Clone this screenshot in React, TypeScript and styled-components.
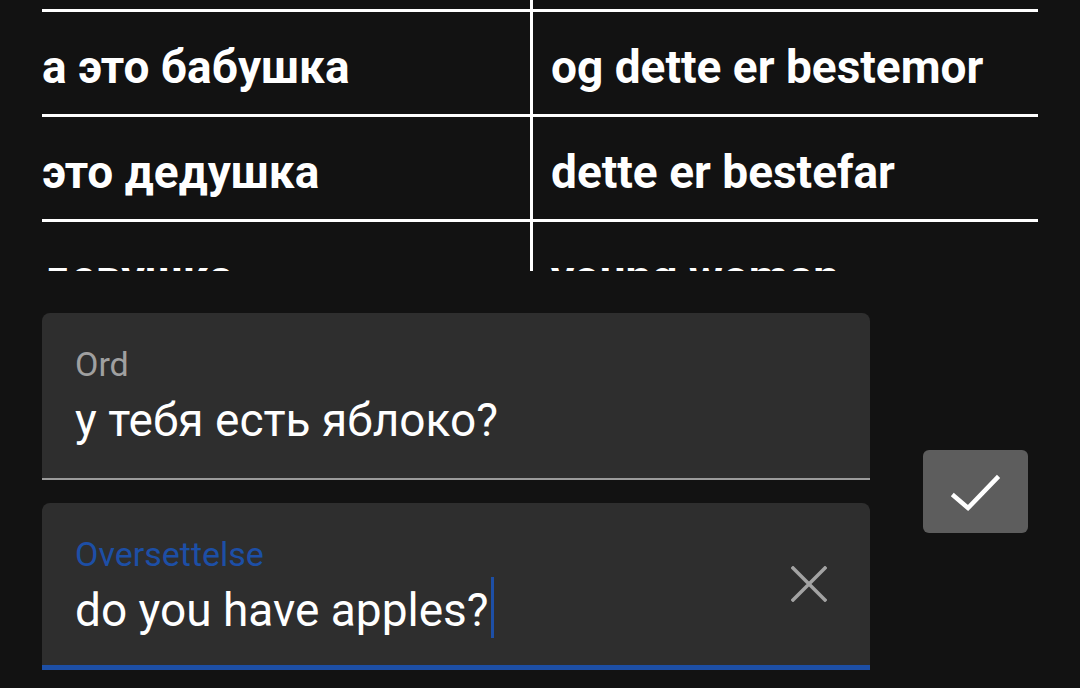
import React from "react";
import styled, { createGlobalStyle } from "styled-components";

const GlobalStyle = createGlobalStyle`
  html, body { margin: 0; padding: 0; background: #121212; }
  body { font-family: Roboto, "Noto Sans", "Liberation Sans", sans-serif; color: #fff; }
  * { box-sizing: border-box; }
`;

const Page = styled.div`
  width: 1080px;
  height: 688px;
  overflow: hidden;
  background: #121212;
  display: flex;
  flex-direction: column;
`;

const TableViewport = styled.div`
  margin: 0 42px;
  height: 271px;
  overflow: hidden;
  flex-shrink: 0;
`;

const TableInner = styled.div`
  margin-top: -93px;
`;

const Row = styled.div`
  display: grid;
  grid-template-columns: 491px 1fr;
  border-bottom: 3px solid #ffffff;
`;

const Cell = styled.div<{ $first?: boolean }>`
  height: 102px;
  display: flex;
  align-items: center;
  padding-top: 8px;
  padding-left: ${(p) => (p.$first ? "0" : "18px")};
  border-right: ${(p) => (p.$first ? "3px solid #ffffff" : "none")};
  font-size: 46px;
  line-height: 54px;
  font-weight: 700;
  color: #ffffff;
  white-space: nowrap;
`;

const FormRow = styled.div`
  margin-top: 42px;
  padding-left: 42px;
  display: flex;
  align-items: center;
  gap: 53px;
`;

const Fields = styled.div`
  width: 828px;
  display: flex;
  flex-direction: column;
  gap: 23px;
`;

const Field = styled.div<{ $focused?: boolean }>`
  height: 167px;
  background: #2e2e2e;
  border-radius: 8px 8px 0 0;
  border-bottom: ${(p) => (p.$focused ? "5px solid #1d4fa6" : "2px solid #9b9b9b")};
  display: flex;
  align-items: center;
  padding: 0 43px 0 33px;
`;

const FieldBody = styled.div`
  flex: 1;
  align-self: stretch;
  padding-top: 31px;
  display: flex;
  flex-direction: column;
  gap: 8px;
`;

const Label = styled.div<{ $focused?: boolean }>`
  font-size: 34px;
  line-height: 40px;
  color: ${(p) => (p.$focused ? "#1d4fa6" : "#a0a0a0")};
`;

const Value = styled.div`
  font-size: 46px;
  line-height: 56px;
  color: #ffffff;
  white-space: nowrap;
`;

const Caret = styled.span`
  display: inline-block;
  width: 3px;
  height: 61px;
  margin-top: -8px;
  margin-left: 2px;
  background: #1d4fa6;
  vertical-align: -12px;
`;

const ClearButton = styled.div`
  width: 36px;
  height: 36px;
  display: flex;
  flex-shrink: 0;
`;

const SubmitButton = styled.div`
  width: 105px;
  height: 83px;
  border-radius: 6px;
  background: #5d5d5d;
  display: flex;
  align-items: center;
  justify-content: center;
  flex-shrink: 0;
`;

const rows: [string, string][] = [
  ["а это дедушка", "og dette er bestefar"],
  ["а это бабушка", "og dette er bestemor"],
  ["это дедушка", "dette er bestefar"],
  ["девушка", "young woman"],
];

export default function App() {
  return (
    <Page>
      <GlobalStyle />
      <TableViewport>
        <TableInner>
          {rows.map(([a, b], i) => (
            <Row key={i}>
              <Cell $first>{a}</Cell>
              <Cell>{b}</Cell>
            </Row>
          ))}
        </TableInner>
      </TableViewport>
      <FormRow>
        <Fields>
          <Field>
            <FieldBody>
              <Label>Ord</Label>
              <Value>у тебя есть яблоко?</Value>
            </FieldBody>
          </Field>
          <Field $focused>
            <FieldBody>
              <Label $focused>Oversettelse</Label>
              <Value>
                do you have apples?
                <Caret />
              </Value>
            </FieldBody>
            <ClearButton>
              <svg width="36" height="36" viewBox="0 0 36 36">
                <path d="M2 2 L34 34 M34 2 L2 34" stroke="#a3a3a3" strokeWidth="3.5" strokeLinecap="square" fill="none" />
              </svg>
            </ClearButton>
          </Field>
        </Fields>
        <SubmitButton>
          <svg width="105" height="83" viewBox="0 0 105 83">
            <polyline points="31,46 45,58 74,28" stroke="#ffffff" strokeWidth="4.5" fill="none" strokeLinecap="square" />
          </svg>
        </SubmitButton>
      </FormRow>
    </Page>
  );
}
